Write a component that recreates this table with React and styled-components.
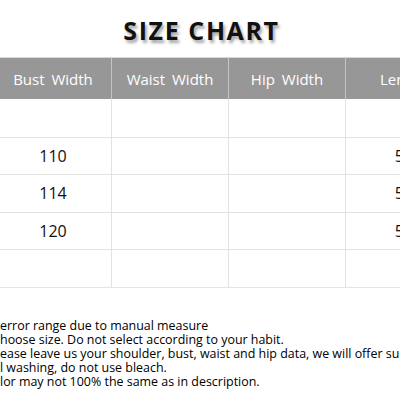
import React from "react";
import styled, { createGlobalStyle } from "styled-components";

const Global = createGlobalStyle`
  html, body { margin: 0; padding: 0; background: #fff; }
  body { width: 400px; height: 400px; overflow: hidden; font-family: "Open Sans", "Noto Sans", sans-serif; }
`;

const Page = styled.div`
  width: 400px;
  height: 400px;
  overflow: hidden;
  display: flex;
  flex-direction: column;
`;

const TitleBar = styled.div`
  height: 57px;
  display: flex;
  align-items: center;
  justify-content: center;
`;

const Title = styled.h1`
  margin: 0;
  padding-top: 2px;
  padding-left: 3px;
  font-family: "Open Sans", sans-serif;
  font-weight: 700;
  font-size: 25px;
  letter-spacing: 1.6px;
  color: #111;
  text-shadow: 2px 3px 3px rgba(0, 0, 0, 0.35);
`;

const Table = styled.div`
  margin-left: -5px;
  width: 600px;
  display: grid;
  grid-template-columns: repeat(5, 117px);
  border-bottom: 1px solid #e4e4e4;
`;

const HeadCell = styled.div`
  height: 42px;
  box-sizing: border-box;
  background: #979797;
  border-top: 1px solid #d8d8d8;
  border-right: 1px solid #c4c4c4;
  color: #fff;
  font-size: 15px;
  word-spacing: 3px;
  display: flex;
  align-items: center;
  justify-content: center;
`;

const Cell = styled.div`
  height: 37.6px;
  box-sizing: border-box;
  border-top: ${(p) => (p.$first ? "none" : "1px solid #e2e2e2")};
  border-right: 1px solid #e2e2e2;
  color: #111;
  font-size: 16px;
  display: flex;
  align-items: center;
  justify-content: center;
`;

const Notes = styled.div`
  margin-top: 31px;
  font-size: 12.45px;
  line-height: 14px;
  color: #000;
  white-space: nowrap;
`;

const Line = styled.div`
  height: 14px;
`;

const headers = ["Bust Width", "Waist Width", "Hip Width", "Length", ""];
const rows = [
  ["", "", "", "", ""],
  ["110", "", "", "56", ""],
  ["114", "", "", "57", ""],
  ["120", "", "", "58", ""],
  ["", "", "", "", ""],
];

const notes = [
  "error range due to manual measure",
  "hoose size. Do not select according to your habit.",
  "ease leave us your shoulder, bust, waist and hip data, we will offer suitable size for you.",
  "l washing, do not use bleach.",
  "lor may not 100% the same as in description.",
];

export default function App() {
  return (
    <Page>
      <Global />
      <TitleBar>
        <Title>SIZE CHART</Title>
      </TitleBar>
      <Table>
        {headers.map((h, i) => (
          <HeadCell key={"h" + i}>{h}</HeadCell>
        ))}
        {rows.map((r, ri) =>
          r.map((c, ci) => (
            <Cell key={ri + "-" + ci} $first={ri === 0}>
              {c}
            </Cell>
          ))
        )}
      </Table>
      <Notes>
        {notes.map((n, i) => (
          <Line key={i}>{n}</Line>
        ))}
      </Notes>
    </Page>
  );
}
